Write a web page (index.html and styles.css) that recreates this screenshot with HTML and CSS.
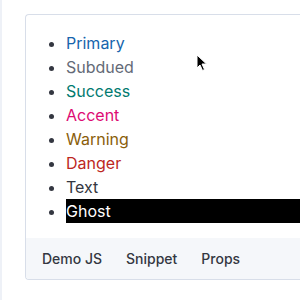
FILE: index.html
```html
<!DOCTYPE html>
<html lang="en">
<head>
  <meta charset="UTF-8" />
  <title>Link colors</title>
  <link rel="stylesheet" href="styles.css">
</head>
<body>
  <div class="page">
    <div class="demo-panel">
      <ul class="link-list">
        <li><a class="link primary">Primary</a></li>
        <li><a class="link subdued">Subdued</a></li>
        <li><a class="link success">Success</a></li>
        <li><a class="link accent">Accent</a></li>
        <li><a class="link warning">Warning</a></li>
        <li><a class="link danger">Danger</a></li>
        <li><a class="link text">Text</a></li>
        <li><a class="link ghost">Ghost</a></li>
      </ul>
      <div class="demo-tabs">
        <button class="tab">Demo JS</button>
        <button class="tab">Snippet</button>
        <button class="tab">Props</button>
      </div>
    </div>
  </div>

  <!-- mouse pointer -->
  <svg class="cursor" width="12" height="18" viewBox="0 0 12 18">
    <path d="M1 1 L1 14 L4 11 L6.5 16.5 L8.5 15.5 L6 10 L10.5 10 Z" fill="#000" stroke="#fff" stroke-width="1"/>
  </svg>
</body>
</html>
```

FILE: styles.css
```css
body {
  margin: 0;
  font-family: Inter, "Liberation Sans", sans-serif;
  background-color: #fff;
  overflow: hidden;
}

.page {
  border-left: 2px solid #eef1f7;
  padding: 14px 0 0 23px;
  height: 300px;
  box-sizing: border-box;
}

/* the panel runs on past the right edge of the frame */
.demo-panel {
  border: 1px solid #d8dee9;
  border-right: none;
  border-radius: 4px 0 0 4px;
  overflow: hidden;
}

.link-list {
  margin: 0;
  padding: 16px 0 15px 40px;
  color: #343741;
}

.link-list li {
  font-size: 16px;
  line-height: 24px;
}

.link {
  cursor: pointer;
}

.primary { color: #1765ad; }
.subdued { color: #646a77; }
.success { color: #017a6f; }
.accent { color: #dd0a73; }
.warning { color: #8a5e0a; }
.danger { color: #bd271e; }
.text { color: #343741; }

.ghost {
  display: block;
  color: #fff;
  background-color: #000;
}

.demo-tabs {
  display: flex;
  align-items: center;
  height: 41px;
  padding: 0 4px;
  background-color: #f5f7fa;
}

.tab {
  font-family: Inter, "Liberation Sans", sans-serif;
  font-size: 14px;
  font-weight: 500;
  color: #343741;
  background: none;
  border: none;
  padding: 0 12px;
  cursor: pointer;
}

.cursor {
  position: absolute;
  left: 196px;
  top: 54px;
}
```
